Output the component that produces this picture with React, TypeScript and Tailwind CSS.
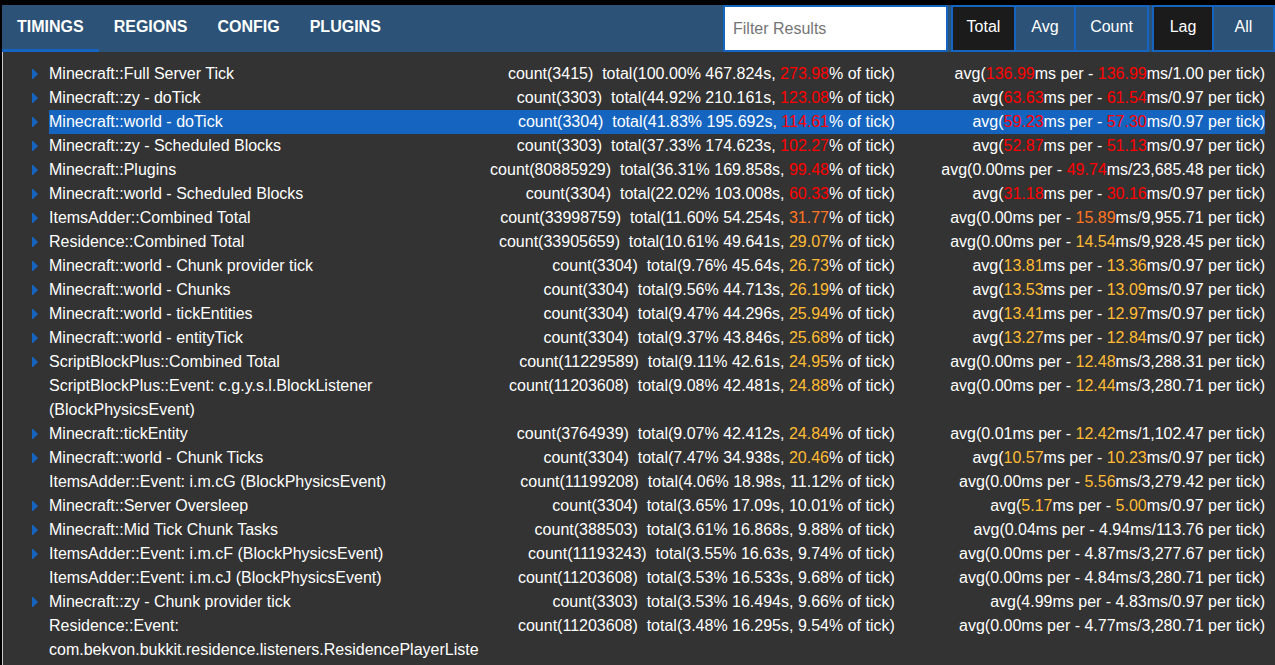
import { useState } from 'react';

type Row = {
  name: string;
  leaf?: boolean;
  count: string;
  total: string;
  pct: string;
  per: string;
  avg: string;
  ticks: string;
};

const row = (
  name: string,
  count: string,
  total: string,
  pct: string,
  per: string,
  avg: string,
  ticks: string,
  leaf = false,
): Row => ({ name, count, total, pct, per, avg, ticks, leaf });

const rows: Row[] = [
  row('Minecraft::Full Server Tick', '3415', '100.00% 467.824s', '273.98', '136.99', '136.99', '1.00'),
  row('Minecraft::zy - doTick', '3303', '44.92% 210.161s', '123.08', '63.63', '61.54', '0.97'),
  row('Minecraft::world - doTick', '3304', '41.83% 195.692s', '114.61', '59.23', '57.30', '0.97'),
  row('Minecraft::zy - Scheduled Blocks', '3303', '37.33% 174.623s', '102.27', '52.87', '51.13', '0.97'),
  row('Minecraft::Plugins', '80885929', '36.31% 169.858s', '99.48', '0.00', '49.74', '23,685.48'),
  row('Minecraft::world - Scheduled Blocks', '3304', '22.02% 103.008s', '60.33', '31.18', '30.16', '0.97'),
  row('ItemsAdder::Combined Total', '33998759', '11.60% 54.254s', '31.77', '0.00', '15.89', '9,955.71'),
  row('Residence::Combined Total', '33905659', '10.61% 49.641s', '29.07', '0.00', '14.54', '9,928.45'),
  row('Minecraft::world - Chunk provider tick', '3304', '9.76% 45.64s', '26.73', '13.81', '13.36', '0.97'),
  row('Minecraft::world - Chunks', '3304', '9.56% 44.713s', '26.19', '13.53', '13.09', '0.97'),
  row('Minecraft::world - tickEntities', '3304', '9.47% 44.296s', '25.94', '13.41', '12.97', '0.97'),
  row('Minecraft::world - entityTick', '3304', '9.37% 43.846s', '25.68', '13.27', '12.84', '0.97'),
  row('ScriptBlockPlus::Combined Total', '11229589', '9.11% 42.61s', '24.95', '0.00', '12.48', '3,288.31'),
  row('ScriptBlockPlus::Event: c.g.y.s.l.BlockListener (BlockPhysicsEvent)', '11203608', '9.08% 42.481s', '24.88', '0.00', '12.44', '3,280.71', true),
  row('Minecraft::tickEntity', '3764939', '9.07% 42.412s', '24.84', '0.01', '12.42', '1,102.47'),
  row('Minecraft::world - Chunk Ticks', '3304', '7.47% 34.938s', '20.46', '10.57', '10.23', '0.97'),
  row('ItemsAdder::Event: i.m.cG (BlockPhysicsEvent)', '11199208', '4.06% 18.98s', '11.12', '0.00', '5.56', '3,279.42', true),
  row('Minecraft::Server Oversleep', '3304', '3.65% 17.09s', '10.01', '5.17', '5.00', '0.97'),
  row('Minecraft::Mid Tick Chunk Tasks', '388503', '3.61% 16.868s', '9.88', '0.04', '4.94', '113.76'),
  row('ItemsAdder::Event: i.m.cF (BlockPhysicsEvent)', '11193243', '3.55% 16.63s', '9.74', '0.00', '4.87', '3,277.67'),
  row('ItemsAdder::Event: i.m.cJ (BlockPhysicsEvent)', '11203608', '3.53% 16.533s', '9.68', '0.00', '4.84', '3,280.71', true),
  row('Minecraft::zy - Chunk provider tick', '3303', '3.53% 16.494s', '9.66', '4.99', '4.83', '0.97'),
  row('Residence::Event: com.bekvon.bukkit.residence.listeners.ResidencePlayerListe', '11203608', '3.48% 16.295s', '9.54', '0.00', '4.77', '3,280.71', true),
];

// Severity thresholds are expressed as [red, orange, yellow].
function Value({ text, limits }: { text: string; limits: [number, number, number] }) {
  const n = parseFloat(text);
  const [red, orange, yellow] = limits;
  const color =
    n > red ? 'text-[#ff0000]' : n > orange ? 'text-[#ff7722]' : n >= yellow ? 'text-[#ffbb33]' : '';
  return <span className={color}>{text}</span>;
}

const tabs = ['TIMINGS', 'REGIONS', 'CONFIG', 'PLUGINS'];

function Choice({ label, width, active, onClick }: { label: string; width: string; active: boolean; onClick: () => void }) {
  return (
    <button
      type="button"
      aria-pressed={active}
      onClick={onClick}
      className={`${width} border-y-2 border-r-2 border-[#1565c0] pb-1 text-center ${active ? 'bg-[#1b1b1b]' : 'bg-[#2c5377]'}`}
    >
      {label}
    </button>
  );
}

export default function App() {
  const [tab, setTab] = useState('TIMINGS');
  const [sort, setSort] = useState('Total');
  const [scope, setScope] = useState('Lag');
  const [filter, setFilter] = useState('');
  const [selected, setSelected] = useState('Minecraft::world - doTick');
  const shown = rows.filter((r) => r.name.toLowerCase().includes(filter.toLowerCase()));

  return (
    <div className="flex min-h-screen flex-col bg-black pt-[5px] pl-[2px] font-['Liberation_Sans',Arial,sans-serif] text-base text-white">
      <header className="flex h-[47px] items-stretch justify-between bg-[#2c5377]">
        <nav className="flex">
          {tabs.map((t) => (
            <a
              key={t}
              href={`#${t.toLowerCase()}`}
              onClick={() => setTab(t)}
              className={`flex items-center border-b-3 px-[15px] pb-px font-bold ${t === tab ? 'border-[#1565c0]' : 'border-transparent'}`}
            >
              {t}
            </a>
          ))}
        </nav>
        <div className="flex items-stretch gap-[3px]">
          <input
            type="text"
            aria-label="Filter Results"
            placeholder="Filter Results"
            value={filter}
            onChange={(e) => setFilter(e.target.value)}
            className="w-[225px] rounded-[2px] border-2 border-[#1565c0] bg-white px-2 text-black outline-none placeholder:text-[#757575]"
          />
          <div className="flex border-l-2 border-[#1565c0]">
            <Choice label="Total" width="w-[63px]" active={sort === 'Total'} onClick={() => setSort('Total')} />
            <Choice label="Avg" width="w-[60px]" active={sort === 'Avg'} onClick={() => setSort('Avg')} />
            <Choice label="Count" width="w-[73px]" active={sort === 'Count'} onClick={() => setSort('Count')} />
          </div>
          <div className="flex border-l-2 border-[#1565c0]">
            <Choice label="Lag" width="w-[60px]" active={scope === 'Lag'} onClick={() => setScope('Lag')} />
            <Choice label="All" width="w-[61px]" active={scope === 'All'} onClick={() => setScope('All')} />
          </div>
        </div>
      </header>

      <main className="flex-1 border-l border-[#cccccc] bg-[#333333] pt-[10px] pr-[10px] pl-7">
        <table className="w-full table-fixed border-collapse leading-6">
          <colgroup>
            <col className="w-[18px]" />
            <col className="w-[35%]" />
            <col />
            <col className="w-[30%]" />
          </colgroup>
          <tbody>
            {shown.map((r) => {
              const bg = r.name === selected ? 'bg-[#1565c0]' : '';
              return (
                <tr key={r.name} className="align-top" onClick={() => setSelected(r.name)}>
                  <td className="p-0">
                    {!r.leaf && (
                      <button type="button" aria-label={`Expand ${r.name}`} className="flex h-6 w-full items-center pl-px">
                        <svg width="6" height="10" viewBox="0 0 6 10" className="fill-[#1565c0]">
                          <path d="M0 0h1l5 5-5 5H0z" />
                        </svg>
                      </button>
                    )}
                  </td>
                  <td className={`p-0 wrap-anywhere ${bg}`}>{r.name}</td>
                  <td className={`p-0 text-right whitespace-nowrap ${bg}`}>
                    count({r.count})&nbsp; total({r.total}, <Value text={r.pct} limits={[50, 30, 20]} />% of tick)
                  </td>
                  <td className={`p-0 text-right whitespace-nowrap ${bg}`}>
                    avg(
                    <Value text={r.per} limits={[25, 15, 5]} />
                    ms per - <Value text={r.avg} limits={[25, 15, 5]} />
                    ms/{r.ticks} per tick)
                  </td>
                </tr>
              );
            })}
          </tbody>
        </table>
      </main>
    </div>
  );
}
